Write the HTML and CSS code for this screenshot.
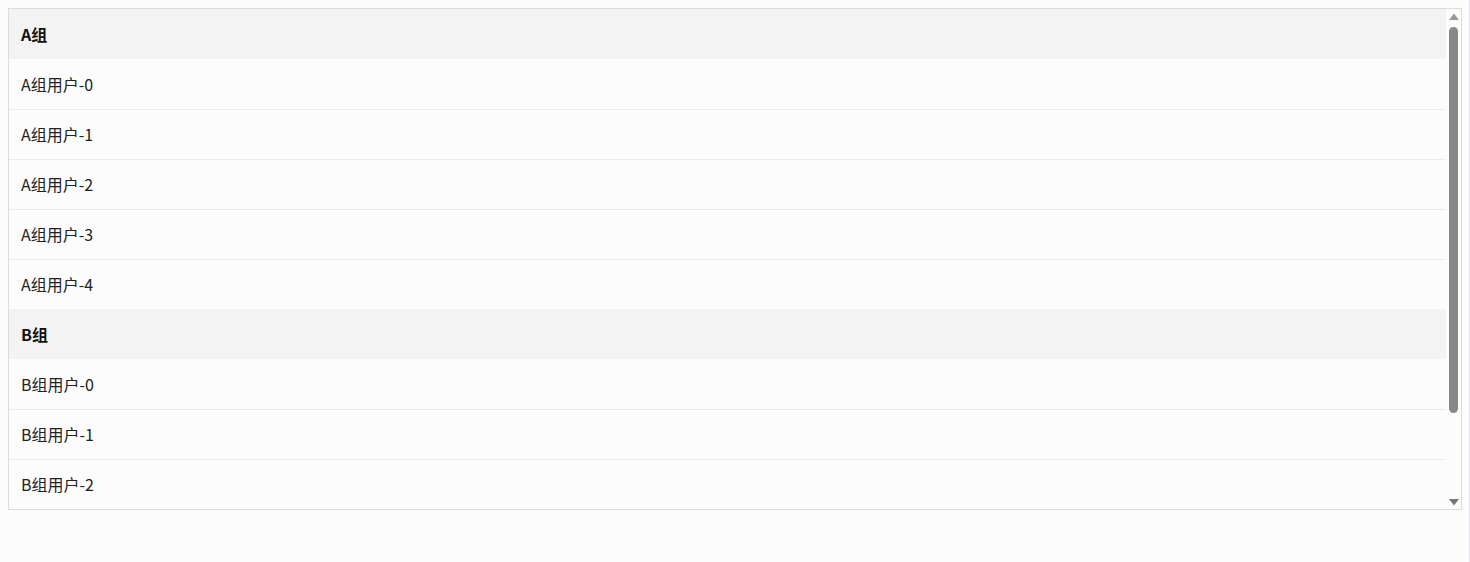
FILE: index.html
```html
<!DOCTYPE html>
<html lang="zh">
<head>
<meta charset="utf-8">
<link rel="stylesheet" href="styles.css">
</head>
<body>
<div class="list">
  <div class="viewport">
    <div class="group">A组</div>
    <div class="item">A组用户-0</div>
    <div class="item">A组用户-1</div>
    <div class="item">A组用户-2</div>
    <div class="item">A组用户-3</div>
    <div class="item">A组用户-4</div>
    <div class="group">B组</div>
    <div class="item">B组用户-0</div>
    <div class="item">B组用户-1</div>
    <div class="item">B组用户-2</div>
    <div class="item">B组用户-3</div>
    <div class="item">B组用户-4</div>
  </div>
  <div class="scrollbar" aria-hidden="true">
    <div class="sb-btn up">
      <svg width="10" height="7" viewBox="0 0 10 7"><polygon points="0,7 10,7 5,0.5"/></svg>
    </div>
    <div class="sb-track"><div class="sb-thumb"></div></div>
    <div class="sb-btn down">
      <svg width="10" height="7" viewBox="0 0 10 7"><polygon points="0,0 10,0 5,6.5"/></svg>
    </div>
  </div>
</div>
</body>
</html>
```
FILE: styles.css
```css
html {
  background: #fcfcfc;
}
html::after {
  content: "";
  position: fixed;
  top: 0;
  right: 0;
  width: 1px;
  height: 100%;
  background: #dde5ee;
}
body {
  margin: 8px;
  font-family: "Noto Sans CJK SC", "Noto Sans", sans-serif;
  font-size: 16px;
  color: #222;
}
.list {
  height: 500px;
  display: flex;
  border: 1px solid #dcdcdc;
  background: #fcfcfc;
}
.viewport {
  flex: 1;
  min-width: 0;
  overflow: hidden;
}
.group {
  height: 50px;
  display: flex;
  align-items: center;
  padding: 0 12px;
  background: #f3f3f3;
  font-weight: bold;
  color: #111;
}
.item {
  height: 50px;
  box-sizing: border-box;
  display: flex;
  align-items: center;
  padding: 0 12px;
}
.item + .item {
  border-top: 1px solid #ebebeb;
  padding-bottom: 1px;
}
.scrollbar {
  width: 15px;
  flex: none;
  display: flex;
  flex-direction: column;
  background: #fcfcfc;
}
.sb-btn {
  height: 15px;
  display: flex;
  align-items: center;
  justify-content: center;
}
.sb-btn svg {
  display: block;
}
.sb-btn.up {
  padding-bottom: 1px;
  box-sizing: border-box;
}
.sb-btn.down {
  padding-top: 2px;
  box-sizing: border-box;
}
.sb-btn.up polygon {
  fill: #999;
}
.sb-btn.down polygon {
  fill: #777;
}
.sb-track {
  flex: 1;
  padding: 3px 3px 0;
}
.sb-thumb {
  height: 386px;
  border-radius: 5px;
  background: #888;
}
```
